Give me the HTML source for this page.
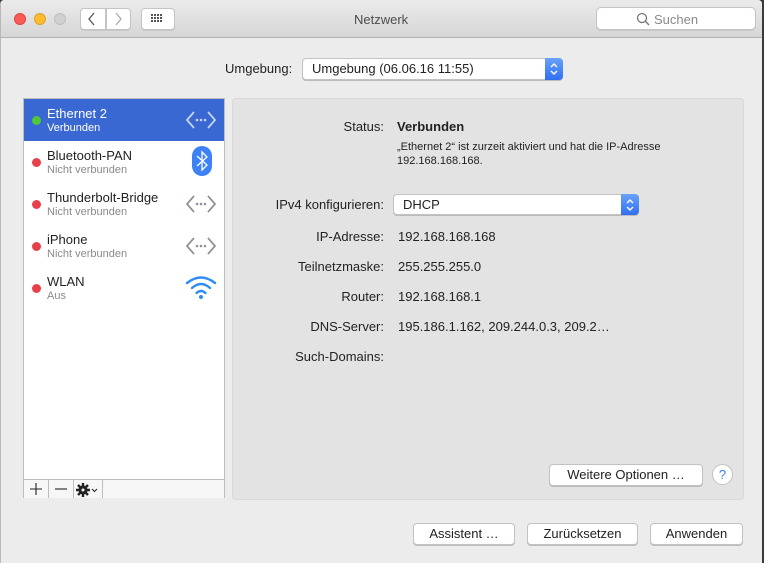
<!DOCTYPE html>
<html><head><meta charset="utf-8"><style>
*{box-sizing:border-box;margin:0;padding:0}
body{width:764px;height:563px;background:#3a3a3a;font-family:"Liberation Sans",sans-serif;font-size:13px;color:#222;position:relative;overflow:hidden}
.win{position:absolute;left:0;top:0;width:762px;height:563px;background:#ececec;border-left:1px solid #b8b8b8;border-radius:4px 4px 0 0;overflow:hidden}
.tb{position:absolute;left:0;top:0;right:0;height:38px;background:linear-gradient(#ebebeb,#d6d6d6);border-bottom:1px solid #b2b2b2}
.dot{position:absolute;top:13px;width:12px;height:12px;border-radius:50%}
.btn{position:absolute;background:#fff;border:1px solid #c4c4c4;border-radius:4px;box-shadow:0 1px 0 #c8c8c8}
.a{position:absolute;white-space:nowrap}
.lbl{position:absolute;right:378px;white-space:nowrap;text-align:right}
.val{position:absolute;left:397px;white-space:nowrap}
.pb{position:absolute;background:#fff;border:1px solid #c2c2c2;border-radius:4px;box-shadow:0 1px 0 #bbb;text-align:center;line-height:20px;font-size:13px}
.row{position:absolute;left:0;width:200px;height:42px}
.row .d{position:absolute;left:8px;top:17px;width:9px;height:9px;border-radius:50%;background:#e8404a}
.row .n{position:absolute;left:23px;top:7px;font-size:13px}
.row .s{position:absolute;left:23px;top:23px;font-size:11px;color:#8a8a8a}
.row svg{position:absolute;left:161px;top:8px}
</style></head><body>
<div class="win">
 <div class="tb">
  <div class="dot" style="left:13px;background:#fc5b57;border:1px solid #e0443e"></div>
  <div class="dot" style="left:33px;background:#fdbc2e;border:1px solid #dea123"></div>
  <div class="dot" style="left:53px;background:#d0d0d0;border:1px solid #bdbdbd"></div>
  <div class="btn" style="left:79px;top:8px;width:26px;height:22px;border-radius:4px 0 0 4px"></div>
  <div class="btn" style="left:105px;top:8px;width:25px;height:22px;border-radius:0 4px 4px 0"></div>
  <svg class="a" style="left:86px;top:12px" width="10" height="14"><path d="M7 1L2 7L7 13" stroke="#555" stroke-width="1.3" fill="none"/></svg>
  <svg class="a" style="left:113px;top:12px" width="10" height="14"><path d="M2 1L7 7L2 13" stroke="#aaa" stroke-width="1.3" fill="none"/></svg>
  <div class="btn" style="left:140px;top:8px;width:34px;height:22px"></div>
  <svg class="a" style="left:150px;top:14px" width="14" height="10"><g fill="#555"><rect x="0" y="0" width="2" height="2"/><rect x="3" y="0" width="2" height="2"/><rect x="6" y="0" width="2" height="2"/><rect x="9" y="0" width="2" height="2"/><rect x="0" y="3" width="2" height="2"/><rect x="3" y="3" width="2" height="2"/><rect x="6" y="3" width="2" height="2"/><rect x="9" y="3" width="2" height="2"/><rect x="0" y="6" width="2" height="2"/><rect x="3" y="6" width="2" height="2"/><rect x="6" y="6" width="2" height="2"/><rect x="9" y="6" width="2" height="2"/></g></svg>
  <div class="a" style="left:353px;top:12px;color:#4d4d4d;font-size:13px">Netzwerk</div>
  <div class="btn" style="left:595px;top:7px;width:160px;height:23px;border-radius:5px"></div>
  <svg class="a" style="left:635px;top:12px" width="14" height="14"><circle cx="6" cy="6" r="4.5" stroke="#777" stroke-width="1.3" fill="none"/><path d="M9.3 9.3L13 13" stroke="#777" stroke-width="1.4"/></svg>
  <div class="a" style="left:653px;top:12px;color:#8a8a8a">Suchen</div>
 </div>

 <div class="a" style="left:224px;top:61px">Umgebung:</div>
 <div class="pb" style="left:301px;top:58px;width:261px;height:22px;text-align:left;padding-left:9px;line-height:20px">Umgebung (06.06.16 11:55)</div>
 <div class="a" style="left:544px;top:58px;width:18px;height:22px;background:linear-gradient(#6aa2fa,#2f6ff0);border-radius:0 4px 4px 0"></div>
 <svg class="a" style="left:548px;top:61px" width="10" height="16"><path d="M2 6L5 3L8 6M2 10L5 13L8 10" stroke="#fff" stroke-width="1.4" fill="none"/></svg>

 <div class="a" style="left:22px;top:98px;width:202px;height:400px;background:#fff;border:1px solid #bdbdbd">
  <div class="row" style="top:0;background:#3a68d2;color:#fff">
   <div class="d" style="background:#4fc738"></div><div class="n" style="color:#fff">Ethernet 2</div><div class="s" style="color:#fff">Verbunden</div>
   <svg width="32" height="26"><path d="M9 5L2 13L9 21M23 5L30 13L23 21" stroke="#c8d4ee" stroke-width="1.8" fill="none"/><circle cx="12" cy="13" r="1.3" fill="#c8d4ee"/><circle cx="16" cy="13" r="1.3" fill="#c8d4ee"/><circle cx="20" cy="13" r="1.3" fill="#c8d4ee"/></svg>
  </div>
  <div class="row" style="top:42px">
   <div class="d"></div><div class="n">Bluetooth-PAN</div><div class="s">Nicht verbunden</div>
   <svg width="32" height="30" style="top:5px"><rect x="7" y="0" width="20" height="30" rx="10" fill="#3d82f5"/><path d="M12 10L22 19L17 24L17 6L22 11L12 20" stroke="#fff" stroke-width="1.3" fill="none"/></svg>
  </div>
  <div class="row" style="top:84px">
   <div class="d"></div><div class="n">Thunderbolt-Bridge</div><div class="s">Nicht verbunden</div>
   <svg width="32" height="26"><path d="M9 5L2 13L9 21M23 5L30 13L23 21" stroke="#8f949c" stroke-width="1.8" fill="none"/><circle cx="12" cy="13" r="1.3" fill="#8f949c"/><circle cx="16" cy="13" r="1.3" fill="#8f949c"/><circle cx="20" cy="13" r="1.3" fill="#8f949c"/></svg>
  </div>
  <div class="row" style="top:126px">
   <div class="d"></div><div class="n">iPhone</div><div class="s">Nicht verbunden</div>
   <svg width="32" height="26"><path d="M9 5L2 13L9 21M23 5L30 13L23 21" stroke="#8f949c" stroke-width="1.8" fill="none"/><circle cx="12" cy="13" r="1.3" fill="#8f949c"/><circle cx="16" cy="13" r="1.3" fill="#8f949c"/><circle cx="20" cy="13" r="1.3" fill="#8f949c"/></svg>
  </div>
  <div class="row" style="top:168px">
   <div class="d"></div><div class="n">WLAN</div><div class="s">Aus</div>
   <svg width="32" height="26" style="top:8px"><g stroke="#2f8cf0" stroke-width="2.4" fill="none" stroke-linecap="round"><path d="M2 8Q16 -3 30 8"/><path d="M7 13Q16 5 25 13"/><path d="M11.5 18Q16 14 20.5 18"/></g><circle cx="16" cy="22" r="2" fill="#2f8cf0"/></svg>
  </div>
  <div class="a" style="left:0;top:380px;width:200px;height:19px;background:#f7f7f7;border-top:1px solid #bdbdbd">
   <div class="a" style="left:24px;top:0;width:1px;height:18px;background:#bdbdbd"></div>
   <div class="a" style="left:49px;top:0;width:1px;height:18px;background:#bdbdbd"></div>
   <div class="a" style="left:78px;top:0;width:1px;height:18px;background:#bdbdbd"></div>
   <svg class="a" style="left:6px;top:3px" width="12" height="12"><path d="M6 0V12M0 6H12" stroke="#222" stroke-width="1.1"/></svg>
   <svg class="a" style="left:31px;top:3px" width="12" height="12"><path d="M0 6H12" stroke="#222" stroke-width="1.1"/></svg>
   <svg class="a" style="left:52px;top:3px" width="24" height="14"><g fill="#222"><circle cx="7" cy="7" r="4.5"/><g stroke="#222" stroke-width="2.4"><path d="M7 0V14M0 7H14M2 2L12 12M12 2L2 12"/></g></g><circle cx="7" cy="7" r="1.5" fill="#f7f7f7"/><path d="M16 6L18.5 8.5L21 6" stroke="#222" stroke-width="1" fill="none"/></svg>
  </div>
 </div>

 <div class="a" style="left:231px;top:98px;width:512px;height:402px;background:#e3e3e3;border:1px solid #d8d8d8;border-radius:4px"></div>
 <div class="lbl" style="top:119px">Status:</div>
 <div class="val" style="top:119px;left:396px;font-weight:bold">Verbunden</div>
 <div class="val" style="top:140px;left:396px;font-size:11px;line-height:14px">„Ethernet 2“ ist zurzeit aktiviert und hat die IP-Adresse<br>192.168.168.168.</div>
 <div class="lbl" style="top:197px">IPv4 konfigurieren:</div>
 <div class="pb" style="left:392px;top:194px;width:246px;height:21px;text-align:left;padding-left:9px;line-height:19px">DHCP</div>
 <div class="a" style="left:620px;top:194px;width:18px;height:21px;background:linear-gradient(#6aa2fa,#2f6ff0);border-radius:0 4px 4px 0"></div>
 <svg class="a" style="left:624px;top:197px" width="10" height="16"><path d="M2 6L5 3L8 6M2 10L5 13L8 10" stroke="#fff" stroke-width="1.4" fill="none"/></svg>
 <div class="lbl" style="top:229px">IP-Adresse:</div><div class="val" style="top:229px">192.168.168.168</div>
 <div class="lbl" style="top:259px">Teilnetzmaske:</div><div class="val" style="top:259px">255.255.255.0</div>
 <div class="lbl" style="top:289px">Router:</div><div class="val" style="top:289px">192.168.168.1</div>
 <div class="lbl" style="top:319px">DNS-Server:</div><div class="val" style="top:319px">195.186.1.162, 209.244.0.3, 209.2…</div>
 <div class="lbl" style="top:349px">Such-Domains:</div>

 <div class="pb" style="left:548px;top:464px;width:154px;height:22px">Weitere Optionen …</div>
 <div class="a" style="left:711px;top:464px;width:21px;height:21px;border-radius:50%;background:#fff;border:1px solid #c2c2c2;color:#3a7ef0;text-align:center;line-height:19px;font-size:13px">?</div>
 <div class="pb" style="left:412px;top:523px;width:102px;height:22px">Assistent …</div>
 <div class="pb" style="left:526px;top:523px;width:111px;height:22px">Zurücksetzen</div>
 <div class="pb" style="left:649px;top:523px;width:93px;height:22px">Anwenden</div>
</div>
</body></html>
